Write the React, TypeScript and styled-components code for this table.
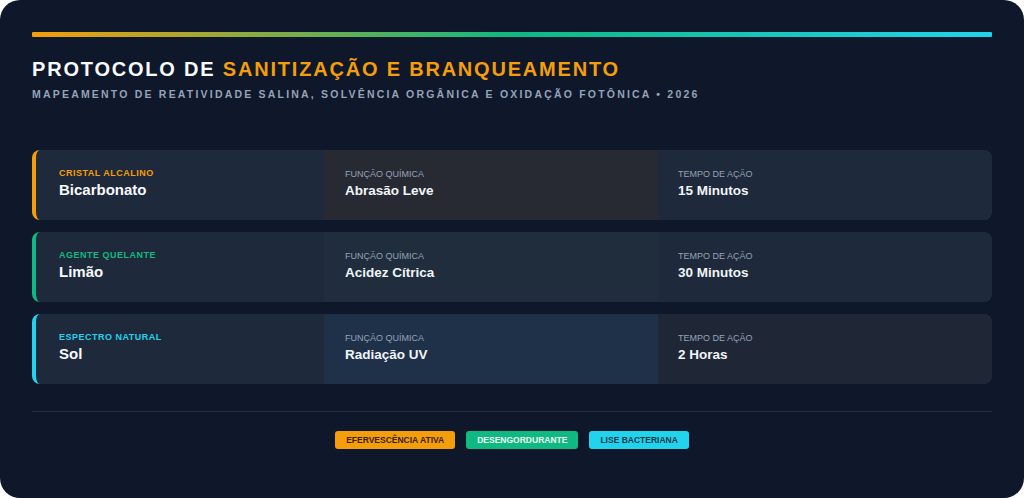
import React from "react";
import styled, { createGlobalStyle } from "styled-components";

const Global = createGlobalStyle`
  html, body { margin: 0; padding: 0; background: #ffffff; }
  body { font-family: "Liberation Sans", Arial, sans-serif; }
  * { box-sizing: border-box; }
`;

const Card = styled.div`
  width: 1024px;
  height: 498px;
  background: #0f172a;
  border-radius: 20px;
  padding: 32px 32px 0;
  display: flex;
  flex-direction: column;
  overflow: hidden;
`;

const Bar = styled.div`
  height: 5px;
  border-radius: 1px;
  background: linear-gradient(90deg, #f59e0b 0%, #10b981 50%, #22d3ee 100%);
`;

const Title = styled.h1`
  margin: 21px 0 0;
  font-size: 20px;
  line-height: 23px;
  font-weight: 700;
  letter-spacing: 1.8px;
  color: #f8fafc;
  white-space: nowrap;
`;

const Accent = styled.span`
  color: #f59e0b;
`;

const Subtitle = styled.p`
  margin: 7px 0 0;
  font-size: 10.5px;
  line-height: 13px;
  font-weight: 700;
  letter-spacing: 2.2px;
  color: #94a3b8;
  white-space: nowrap;
`;

const Rows = styled.div`
  margin-top: 49px;
  display: flex;
  flex-direction: column;
  gap: 12px;
`;

const Row = styled.div<{ $accent: string }>`
  display: grid;
  grid-template-columns: 288px 334px 1fr;
  height: 70px;
  background: #1e293b;
  border-left: 4px solid ${(p) => p.$accent};
  border-radius: 8px;
  overflow: hidden;
`;

const Cell = styled.div<{ $bg?: string; $pad: number }>`
  display: flex;
  flex-direction: column;
  justify-content: center;
  gap: 2px;
  padding-left: ${(p) => p.$pad}px;
  padding-bottom: 3px;
  background: ${(p) => p.$bg || "transparent"};
`;

const Kicker = styled.div<{ $color: string }>`
  font-size: 9px;
  line-height: 11px;
  font-weight: 700;
  letter-spacing: 0.5px;
  color: ${(p) => p.$color};
`;

const Label = styled.div`
  font-size: 9px;
  line-height: 11px;
  font-weight: 400;
  color: #94a3b8;
`;

const Name = styled.div`
  font-size: 15px;
  line-height: 18px;
  font-weight: 700;
  color: #f8fafc;
`;

const Value = styled.div`
  font-size: 13.5px;
  line-height: 17px;
  font-weight: 700;
  color: #f1f5f9;
`;

const Divider = styled.div`
  margin-top: 27px;
  height: 1px;
  background: #263042;
`;

const Tags = styled.div`
  margin-top: 19px;
  display: flex;
  justify-content: center;
  gap: 11px;
`;

const Tag = styled.span<{ $bg: string; $fg: string }>`
  display: inline-flex;
  align-items: center;
  height: 18px;
  padding: 0 11px;
  border-radius: 3px;
  background: ${(p) => p.$bg};
  color: ${(p) => p.$fg};
  font-size: 8.5px;
  font-weight: 700;
`;

const items = [
  {
    accent: "#f59e0b",
    kicker: "CRISTAL ALCALINO",
    name: "Bicarbonato",
    func: "Abrasão Leve",
    time: "15 Minutos",
    mid: "#272a33",
    end: "#1e293b",
  },
  {
    accent: "#10b981",
    kicker: "AGENTE QUELANTE",
    name: "Limão",
    func: "Acidez Cítrica",
    time: "30 Minutos",
    mid: "#1f2d3c",
    end: "#1e293b",
  },
  {
    accent: "#22d3ee",
    kicker: "ESPECTRO NATURAL",
    name: "Sol",
    func: "Radiação UV",
    time: "2 Horas",
    mid: "#1f3149",
    end: "#1f2737",
  },
];

export default function App() {
  return (
    <>
      <Global />
      <Card>
        <Bar />
        <Title>
          PROTOCOLO DE <Accent>SANITIZAÇÃO E BRANQUEAMENTO</Accent>
        </Title>
        <Subtitle>
          MAPEAMENTO DE REATIVIDADE SALINA, SOLVÊNCIA ORGÂNICA E OXIDAÇÃO FOTÔNICA • 2026
        </Subtitle>
        <Rows>
          {items.map((it) => (
            <Row key={it.name} $accent={it.accent}>
              <Cell $pad={23}>
                <Kicker $color={it.accent}>{it.kicker}</Kicker>
                <Name>{it.name}</Name>
              </Cell>
              <Cell $pad={21} $bg={it.mid}>
                <Label>FUNÇÃO QUÍMICA</Label>
                <Value>{it.func}</Value>
              </Cell>
              <Cell $pad={20} $bg={it.end}>
                <Label>TEMPO DE AÇÃO</Label>
                <Value>{it.time}</Value>
              </Cell>
            </Row>
          ))}
        </Rows>
        <Divider />
        <Tags>
          <Tag $bg="#f59e0b" $fg="#3b2306">EFERVESCÊNCIA ATIVA</Tag>
          <Tag $bg="#10b981" $fg="#ecfdf5">DESENGORDURANTE</Tag>
          <Tag $bg="#22d3ee" $fg="#0c3a4a">LISE BACTERIANA</Tag>
        </Tags>
      </Card>
    </>
  );
}
